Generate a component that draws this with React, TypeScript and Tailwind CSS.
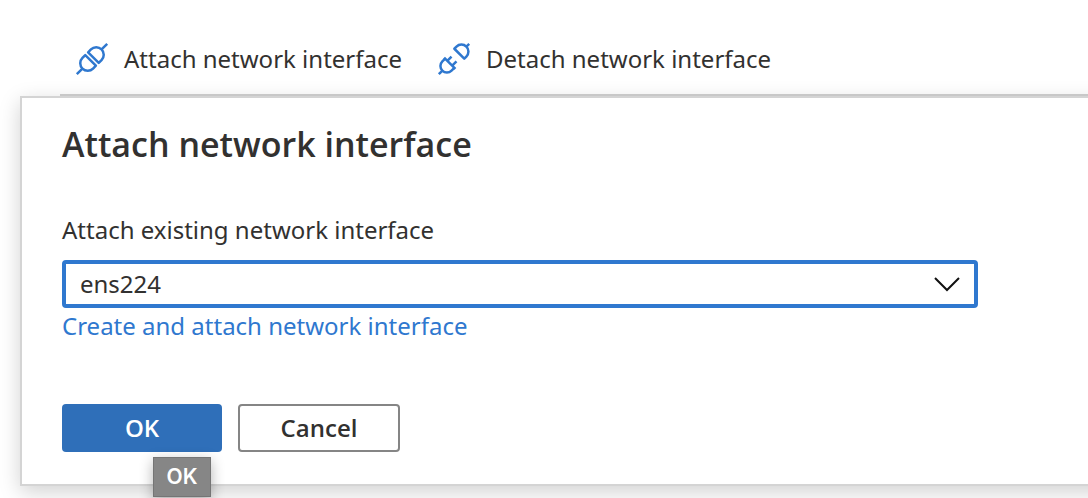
import { useState } from "react";

function AttachIcon() {
  return (
    <svg className="size-8 shrink-0 overflow-visible" viewBox="-16 -16 32 32" fill="none" stroke="#2f78cf" strokeWidth="2.5" strokeLinejoin="round" aria-hidden="true">
      <g transform="rotate(-45)">
        <path d="M-21.5 0H-13.5M13.5 0H21.5" />
        <path d="M-2 -7.5H-6A7.5 7.5 0 0 0 -6 7.5H-2Z" />
        <path d="M2 -7.5H6A7.5 7.5 0 0 1 6 7.5H2Z" />
      </g>
    </svg>
  );
}

function DetachIcon() {
  return (
    <svg className="size-8 shrink-0 overflow-visible" viewBox="-16 -16 32 32" fill="none" stroke="#2f78cf" strokeWidth="2.5" strokeLinejoin="round" aria-hidden="true">
      <g transform="rotate(-45)">
        <path d="M-21.5 0H-17M17.5 0H21.5" />
        <path d="M-6 -6.5H-10A6.5 6.5 0 0 0 -10 6.5H-6" />
        <path d="M-6 -8V8M-6 -3.5H0M-6 3.5H0" />
        <path d="M7.5 -7H10.5A7 7 0 0 1 10.5 7H7.5Z" />
      </g>
    </svg>
  );
}

export default function App() {
  const [nic, setNic] = useState("ens224");
  return (
    <div className="overflow-hidden bg-white pb-3 pl-5 pt-6 font-['Noto_Sans','Open_Sans',sans-serif] text-2xl text-[#323130]">
      <div className="ml-10 flex h-[72px] items-center gap-9 border-b-2 border-[#d2d2d2] pl-4">
        <button type="button" className="flex items-center gap-4 whitespace-nowrap">
          <AttachIcon />
          Attach network interface
        </button>
        <button type="button" className="flex items-center gap-4 whitespace-nowrap">
          <DetachIcon />
          Detach network interface
        </button>
      </div>
      <section className="-mr-10 border-2 border-[#d4d4d4] bg-white pb-8 pl-10 pr-[148px] pt-6 shadow-[0_6px_20px_rgba(0,0,0,0.18)]">
        <h1 className="font-['Open_Sans',sans-serif] text-[34px] font-semibold leading-11">Attach network interface</h1>
        <label htmlFor="nic" className="mt-11 block leading-10">
          Attach existing network interface
        </label>
        <div className="mt-2.5 grid items-center">
          <select
            id="nic"
            value={nic}
            onChange={(e) => setNic(e.target.value)}
            className="col-start-1 row-start-1 h-12 appearance-none rounded border-4 border-[#2f78cf] bg-white pl-3.5 pr-14 outline-none"
          >
            <option>ens224</option>
          </select>
          <svg className="pointer-events-none col-start-1 row-start-1 mr-4 h-4 w-7 justify-self-end" viewBox="0 0 28 16" fill="none" stroke="#111" strokeWidth="2" aria-hidden="true">
            <path d="M1 2L13 14L25 2" />
          </svg>
        </div>
        <a href="#create" className="block w-fit leading-9 text-[#2f78cf]">
          Create and attach network interface
        </a>
        <div className="mt-15 flex gap-4 font-['Open_Sans',sans-serif] font-semibold">
          <div className="relative">
            <button type="button" className="h-12 w-40 rounded bg-[#2f6fb9] text-white">
              OK
            </button>
            <div role="tooltip" className="absolute left-[91px] top-[53px] flex h-10 w-[58px] items-center justify-center border border-[#757575] bg-[#868686] font-['Inter',sans-serif] text-[21px] font-semibold text-white shadow-[0_4px_14px_rgba(0,0,0,0.3)]">
              OK
            </div>
          </div>
          <button type="button" className="h-12 w-[162px] rounded border-2 border-[#858585] bg-white">
            Cancel
          </button>
        </div>
      </section>
    </div>
  );
}
